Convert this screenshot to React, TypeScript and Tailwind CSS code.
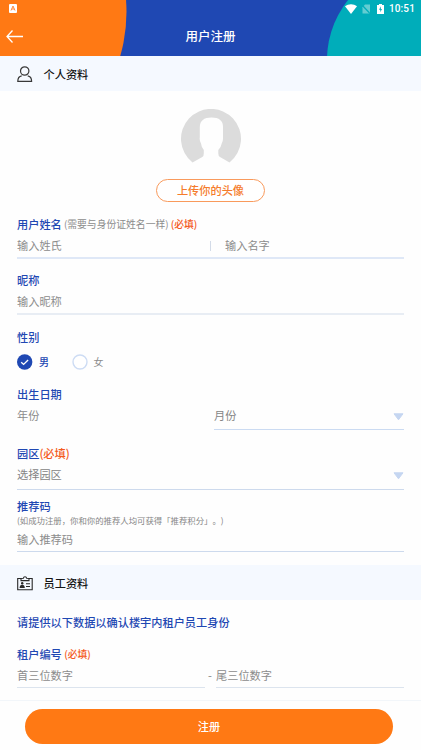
import { useState, type ReactNode } from 'react';

const required = <span className="text-[#f4591c]">(必填)</span>;

function StatusIcons() {
  return (
    <div className="flex h-[17px] items-center pl-[9px] pr-[6px]">
      <svg width="8" height="9" viewBox="0 0 8 9" aria-hidden="true">
        <rect width="8" height="9" rx="1" fill="#fff" />
        <path d="M2 6.5 4 2l2 4.5M2.8 5h2.4" fill="none" stroke="#ff8a3d" strokeWidth="1" />
      </svg>
      <svg className="ml-auto" width="12" height="10" viewBox="0 0 12 10" aria-hidden="true">
        <path d="M0 2.3C3.3-.5 8.7-.5 12 2.3L6 10Z" fill="#fff" />
      </svg>
      <svg className="ml-[5px]" width="8" height="10" viewBox="0 0 8 10" aria-hidden="true">
        <path d="M3 .5h5v9H.5V3.3Z" fill="#62cdd2" />
        <path d="M0 1l8 8.5" stroke="#00adba" strokeWidth="1.2" />
      </svg>
      <svg className="ml-[7px]" width="7" height="10" viewBox="0 0 7 10" aria-hidden="true">
        <path d="M2 0h3v1h2v9H0V1h2Z" fill="#fff" />
        <path d="M4 2.2 2 5.7h1.3v2.5L5 4.9H3.8Z" fill="#00adba" />
      </svg>
      <span className="ml-[5px] pt-px font-[Roboto,sans-serif] text-[10px] font-medium leading-none tracking-[0.15px] text-white">10:51</span>
    </div>
  );
}

function Header() {
  return (
    <header className="relative h-14 overflow-hidden bg-[#1f48b3]">
      <svg className="absolute inset-0" width="421" height="56" viewBox="0 0 421 56" aria-hidden="true">
        <circle cx="-30.5" cy="12" r="157" fill="#ff7914" />
        <circle cx="423" cy="60" r="96" fill="#00adba" />
      </svg>
      <div className="relative">
        <StatusIcons />
        <div className="flex h-[38px] items-center justify-center">
          <button type="button" aria-label="返回" className="absolute left-[6px]">
            <svg width="18" height="14" viewBox="0 0 18 14" fill="none" stroke="#fff" strokeWidth="1.3">
              <path d="M17 7.5H1M6.5 1.5 1 7.5l5.5 6" />
            </svg>
          </button>
          <h1 className="text-[12.5px] font-medium leading-none text-white">用户注册</h1>
        </div>
      </div>
    </header>
  );
}

function SectionTitle({ icon, children }: { icon: ReactNode; children: ReactNode }) {
  return (
    <div className="flex h-[35px] items-center bg-[#f5f9ff] pl-[17px] pt-[2px]">
      <span className="flex w-[26.5px]">{icon}</span>
      <h2 className="text-[11.2px] font-medium leading-none text-[#151515]">{children}</h2>
    </div>
  );
}

function Label({ children }: { children: ReactNode }) {
  return <div className="flex h-5 items-center whitespace-pre font-medium text-[#1f48b3]">{children}</div>;
}

function TextInput({ placeholder }: { placeholder: string }) {
  return (
    <input
      placeholder={placeholder}
      className="block h-5 w-full min-w-0 bg-transparent text-[11.2px] leading-5 text-[#555] outline-none placeholder:text-[#8c8c8c]"
    />
  );
}

function Select({ children }: { children: ReactNode }) {
  return (
    <button type="button" className="flex h-5 w-full items-center justify-between text-[#858585]">
      {children}
      <svg className="mt-[2px]" width="11" height="8" viewBox="0 0 11 8" aria-hidden="true">
        <path d="M1 .8h9L5.5 6.8Z" fill="#c5d6f1" stroke="#c5d6f1" strokeLinejoin="round" />
      </svg>
    </button>
  );
}

function Radio({ label, checked, onSelect }: { label: string; checked: boolean; onSelect: () => void }) {
  return (
    <button type="button" role="radio" aria-checked={checked} onClick={onSelect} className="flex w-[54.5px] items-center gap-[6px]">
      <svg width="16" height="16" viewBox="0 0 16 16" aria-hidden="true">
        {checked ? (
          <>
            <circle cx="7.7" cy="8" r="7.7" fill="#1f48b3" />
            <path d="m4.2 8.2 2.4 2.2 4.5-4.3" fill="none" stroke="#fff" strokeWidth="1.4" />
          </>
        ) : (
          <circle cx="8" cy="8" r="7" fill="#fff" stroke="#cddcf4" strokeWidth="1.4" />
        )}
      </svg>
      <span className={checked ? 'text-[10px] font-medium text-[#1f48b3]' : 'text-[10px] text-[#8c8c8c]'}>{label}</span>
    </button>
  );
}

const personIcon = (
  <svg width="16" height="17" viewBox="0 0 16 17" fill="none" stroke="#383838" strokeWidth="1.2" aria-hidden="true">
    <circle cx="7.7" cy="5" r="4.2" />
    <path d="M4.7 9.9C2.3 10.3.8 12 .8 15.3h13.8c0-3.3-1.500-5-3.900-5.400" />
  </svg>
);

const badgeIcon = (
  <svg width="16" height="15" viewBox="0 0 16 15" fill="none" stroke="#292929" strokeWidth="1.1" aria-hidden="true">
    <path d="M4 2.5H.7v11.2h14.5V2.5H12" />
    <path d="M4 4.6V2.5L6.3 2.3C6.5 1.2 7 .7 8 .7s1.5.5 1.7 1.6l2.3.2v2.1Z" />
    <circle cx="5.2" cy="7.2" r="1.2" fill="#292929" stroke="none" />
    <path d="M2.6 11.9c.1-2.2 1-3.2 2.6-3.2s2.5 1 2.6 3.2Z" fill="#292929" stroke="none" />
    <path d="M9 7.7h4M9 10.5h4" />
  </svg>
);

export default function App() {
  const [gender, setGender] = useState('男');

  return (
    <main className="h-[750px] w-[421px] overflow-hidden bg-[#fefefe] font-['Noto_Sans_CJK_SC',sans-serif] text-[11.2px] leading-none">
      <Header />
      <SectionTitle icon={personIcon}>个人资料</SectionTitle>

      <div className="flex h-[124px] flex-col items-center pt-[18px]">
        <svg width="60" height="54" viewBox="0 0 60 54" aria-hidden="true">
          <path
            d="M11.5 53.5A30 30 0 1 1 48.5 53.5L39 48Q37.3 47 37.3 44.5V41Q40 38.5 40.7 34.5Q42.3 32 42 28V18Q42 8.5 30.5 8.5T18.8 18V28Q18.3 32 20 34.5Q20.5 38.5 22.8 41V44.5Q22.8 47 21.3 48Z"
            fill="#dcdcdc"
          />
        </svg>
        <button
          type="button"
          className="mt-[16px] h-[23px] w-[109px] rounded-full border border-[#f99a5c] bg-white text-[11.2px] font-medium leading-none text-[#f57c2c]"
        >
          上传你的头像
        </button>
      </div>

      <form>
        <div className="flex flex-col px-[17px] pb-[13px]">
          <Label>
            用户姓名<span className="text-[9.8px] font-normal text-[#8c8c8c]"> (需要与身份证姓名一样) </span>
            <span className="text-[9.8px]">{required}</span>
          </Label>
          <div className="flex h-[24px] items-start border-b-2 border-[#dfe8f7]">
            <div className="w-[193px]"><TextInput placeholder="输入姓氏" /></div>
            <div className="mt-[6px] h-[10px] w-px bg-[#d3dbe8]" />
            <div className="flex-1 pl-[14px]"><TextInput placeholder="输入名字" /></div>
          </div>

          <div className="mt-[12px]"><Label>昵称</Label></div>
          <div className="h-[24px] border-b-2 border-[#e8edf4]"><TextInput placeholder="输入昵称" /></div>

          <div className="mt-[13px]"><Label>性别</Label></div>
          <div role="radiogroup" className="mt-[6px] flex h-4 items-center">
            <Radio label="男" checked={gender === '男'} onSelect={() => setGender('男')} />
            <Radio label="女" checked={gender === '女'} onSelect={() => setGender('女')} />
          </div>

          <div className="mt-[15px]"><Label>出生日期</Label></div>
          <div className="flex h-[25px] items-start">
            <div className="w-[197px]"><TextInput placeholder="年份" /></div>
            <div className="h-[25px] flex-1 border-b border-[#cbdbf2] pt-[1px]"><Select>月份</Select></div>
          </div>

          <div className="mt-[14px]"><Label>园区{required}</Label></div>
          <div className="h-[26px] border-b border-[#cddaed] pt-[1px]"><Select>选择园区</Select></div>

          <div className="mt-[7px]"><Label>推荐码</Label></div>
          <p className="-mt-[3px] h-[12px] whitespace-nowrap text-[8.4px] leading-3 text-[#858585] [text-spacing-trim:space-all]">
            (如成功注册，你和你的推荐人均可获得「推荐积分」。)
          </p>
          <div className="h-[26px] border-b border-[#cddaed] pt-[3px]"><TextInput placeholder="输入推荐码" /></div>
        </div>

        <SectionTitle icon={badgeIcon}>员工资料</SectionTitle>

        <div className="h-[100px] px-[17px] pt-[13px]">
          <Label>请提供以下数据以确认楼宇内租户员工身份</Label>
          <div className="mt-[12px]"><Label>租户编号 <span className="text-[9.8px]">{required}</span></Label></div>
          <div className="flex h-[23px] items-start">
            <div className="h-[23px] w-[188px] border-b border-[#dce4ee]"><TextInput placeholder="首三位数字" /></div>
            <span className="w-[11px] pl-[3px] leading-5 text-[#858585]">-</span>
            <div className="h-[23px] flex-1 border-b border-[#dce4ee]"><TextInput placeholder="尾三位数字" /></div>
          </div>
        </div>

        <footer className="h-[50px] border-t border-[#f2f6fa] pl-[25px] pr-[28px] pt-[8px]">
          <button type="submit" className="h-[35px] w-full rounded-full bg-[#ff7914] text-[11.2px] font-medium leading-none text-white">
            注册
          </button>
        </footer>
      </form>
    </main>
  );
}
